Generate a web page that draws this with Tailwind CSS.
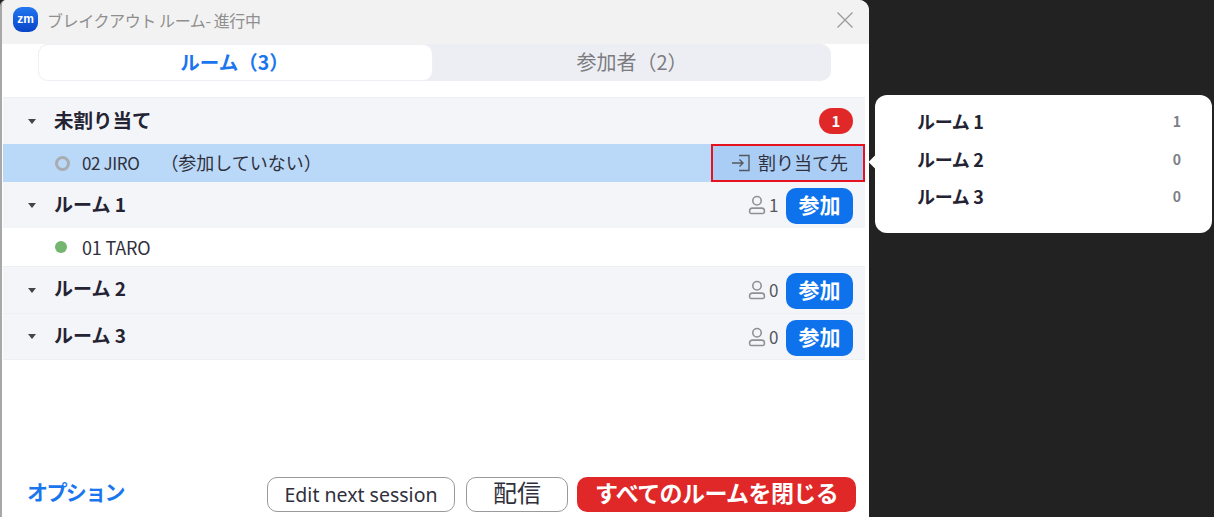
<!DOCTYPE html>
<html lang="ja">
<head>
  <meta charset="UTF-8" />
  <title>ブレイクアウト ルーム</title>
  <script src="https://cdn.jsdelivr.net/npm/@tailwindcss/browser@4"></script>
</head>
<body class="bg-[#222222] w-[1214px] h-[517px] overflow-hidden flex font-['Noto_Sans_CJK_JP','Noto_Sans',sans-serif]">

  <!-- main window -->
  <div class="w-[869px] h-[517px] bg-white rounded-tr-[10px] rounded-tl-[6px] border-l-2 border-[#a8a8a8] flex flex-col shrink-0 overflow-hidden">
    <div class="h-[44px] bg-[#f2f2f2] flex items-center pl-[11px] pr-[15px] shrink-0">
      <div class="w-[25px] h-[25px] -mt-[6px] rounded-[9px] bg-gradient-to-b from-[#2276f0] to-[#0b45c8] flex items-center justify-center text-white text-[12px] font-bold leading-none font-['Liberation_Sans',sans-serif]">zm</div>
      <span class="ml-[9px] -mt-[5px] text-[16px] text-[#8f8f8f] leading-none tracking-[-0.4px]">ブレイクアウト ルーム- 進行中</span>
      <svg class="ml-auto -mt-[5px]" width="18" height="18" viewBox="0 0 18 18" fill="none" stroke="#9a9a9a" stroke-width="1.3"><path d="M1.5 1.5 16.5 16.5M16.5 1.5 1.5 16.5"/></svg>
    </div>

    <div class="ml-[36px] w-[793px] h-[37px] bg-[#eceef4] rounded-[10px] flex shrink-0">
      <div class="w-[395px] bg-white border border-[#eff0f6] rounded-[10px] flex items-center justify-center pb-[2px] pr-[2px] text-[19.5px] font-bold text-[#1a76ee] whitespace-nowrap">ルーム（3）</div>
      <div class="flex-1 flex items-center justify-center pb-[2px] text-[20px] text-[#7c7c80] whitespace-nowrap">参加者（2）</div>
    </div>

    <div class="mt-[16px] ml-[1px] w-[862px] flex flex-col">
      <div class="h-[47px] bg-[#f4f5f8] border-t border-[#eeeff2] flex items-center pl-[25px] pr-[12px]">
        <span class="w-0 h-0 border-x-[4px] border-x-transparent border-t-[5px] border-t-[#444444]"></span>
        <span class="ml-[18px] -mt-[3px] text-[19.5px] font-bold text-[#232333]">未割り当て</span>
        <span class="ml-auto w-[34px] h-[26px] rounded-full bg-[#e02828] text-white text-[15px] font-bold flex items-center justify-center">1</span>
      </div>

      <div class="h-[38px] bg-[#bad8f7] flex items-center pl-[52px]">
        <span class="w-[15px] h-[15px] rounded-full border-[3px] border-[#a9adb2]"></span>
        <span class="ml-[12px] text-[17px] text-[#30303c] tracking-[-0.4px]">02 JIRO</span>
        <span class="ml-[21px] -mt-[2px] text-[18px] text-[#30303c] whitespace-nowrap">（参加していない）</span>
        <div class="ml-auto w-[154px] h-[38px] bg-[#a9cdf5] border-2 border-[#e8121e] flex items-center pl-[18px] gap-[7px]">
          <svg width="20" height="18" viewBox="0 0 20 18" fill="none" stroke="#55585f" stroke-width="1.4"><path d="M8 1.5h10v15H8M1 9h11M8.5 5.5 12 9l-3.5 3.5"/></svg>
          <span class="-mt-[2px] text-[18px] text-[#30303c] whitespace-nowrap">割り当て先</span>
        </div>
      </div>

      <div class="h-[46px] bg-[#f4f5f8] flex items-center pl-[25px] pr-[12px]">
        <span class="w-0 h-0 border-x-[4px] border-x-transparent border-t-[5px] border-t-[#444444]"></span>
        <span class="ml-[18px] -mt-[1px] text-[19px] font-bold text-[#232333]">ルーム 1</span>
        <svg class="ml-auto" width="18" height="20" viewBox="0 0 16 19" fill="none" stroke="#8e9096" stroke-width="1.5"><circle cx="8" cy="5.5" r="4"/><path d="M3.5 12.5h9a2.5 2.5 0 0 1 2.5 2.5v1.2a1.3 1.3 0 0 1-1.3 1.3H2.3A1.3 1.3 0 0 1 1 16.2V15a2.5 2.5 0 0 1 2.5-2.5Z"/></svg>
        <span class="ml-[3px] w-[13px] text-[17px] text-[#55555f]">1</span>
        <span class="ml-[4px] mt-[2px] w-[67px] h-[36px] rounded-[10px] bg-[#0e72ed] text-white text-[21px] font-bold flex items-center justify-center pb-[2px]">参加</span>
      </div>

      <div class="h-[39px] bg-white border-b border-[#eeeff2] flex items-center pl-[52px]">
        <span class="w-[12px] h-[12px] rounded-full bg-[#74b56f]"></span>
        <span class="ml-[15px] text-[18px] text-[#30303c] tracking-[-0.2px]">01 TARO</span>
      </div>

      <div class="h-[47px] bg-[#f4f5f8] border-b border-[#eeeff2] flex items-center pl-[25px] pr-[12px]">
        <span class="w-0 h-0 border-x-[4px] border-x-transparent border-t-[5px] border-t-[#444444]"></span>
        <span class="ml-[18px] -mt-[3px] text-[19px] font-bold text-[#232333]">ルーム 2</span>
        <svg class="ml-auto" width="18" height="20" viewBox="0 0 16 19" fill="none" stroke="#8e9096" stroke-width="1.5"><circle cx="8" cy="5.5" r="4"/><path d="M3.5 12.5h9a2.5 2.5 0 0 1 2.5 2.5v1.2a1.3 1.3 0 0 1-1.3 1.3H2.3A1.3 1.3 0 0 1 1 16.2V15a2.5 2.5 0 0 1 2.5-2.5Z"/></svg>
        <span class="ml-[3px] w-[13px] text-[17px] text-[#55555f]">0</span>
        <span class="ml-[4px] mt-[2px] w-[67px] h-[36px] rounded-[10px] bg-[#0e72ed] text-white text-[21px] font-bold flex items-center justify-center pb-[2px]">参加</span>
      </div>

      <div class="h-[46px] bg-[#f4f5f8] border-b border-[#eeeff2] flex items-center pl-[25px] pr-[12px]">
        <span class="w-0 h-0 border-x-[4px] border-x-transparent border-t-[5px] border-t-[#444444]"></span>
        <span class="ml-[18px] -mt-[2px] text-[19px] font-bold text-[#232333]">ルーム 3</span>
        <svg class="ml-auto" width="18" height="20" viewBox="0 0 16 19" fill="none" stroke="#8e9096" stroke-width="1.5"><circle cx="8" cy="5.5" r="4"/><path d="M3.5 12.5h9a2.5 2.5 0 0 1 2.5 2.5v1.2a1.3 1.3 0 0 1-1.3 1.3H2.3A1.3 1.3 0 0 1 1 16.2V15a2.5 2.5 0 0 1 2.5-2.5Z"/></svg>
        <span class="ml-[3px] w-[13px] text-[17px] text-[#55555f]">0</span>
        <span class="ml-[4px] mt-[2px] w-[67px] h-[36px] rounded-[10px] bg-[#0e72ed] text-white text-[21px] font-bold flex items-center justify-center pb-[2px]">参加</span>
      </div>
    </div>

    <div class="mt-auto mb-[5px] flex items-center pl-[25px]">
      <span class="w-[240px] text-[21px] font-bold text-[#1a76ee] tracking-[-1.6px] -mt-[5px]">オプション</span>
      <button class="w-[188px] h-[35px] rounded-[10px] border border-[#9a9a9e] text-[19.5px] text-[#30303c] font-['Noto_Sans',sans-serif] flex items-center justify-center whitespace-nowrap pt-[1px]">Edit next session</button>
      <button class="ml-[11px] w-[102px] h-[35px] rounded-[10px] border border-[#9a9a9e] text-[24px] text-[#30303c] flex items-center justify-center pb-[5px]">配信</button>
      <button class="ml-[9px] w-[279px] h-[35px] rounded-[10px] bg-[#e02828] text-[23px] font-bold text-white tracking-[-0.6px] flex items-center justify-center whitespace-nowrap pb-[4px]">すべてのルームを閉じる</button>
    </div>
  </div>

  <!-- assign menu -->
  <div class="relative ml-[6px] mt-[95px] w-[337px] h-[138px] bg-white rounded-[12px] py-[8px] pl-[42px] pr-[31px] shrink-0">
    <span class="absolute -left-[4px] top-[61px] w-[12px] h-[12px] rotate-45 bg-white"></span>
    <div class="h-[37.5px] flex items-center justify-between"><span class="text-[18px] tracking-[-0.3px] font-bold text-[#232333]">ルーム 1</span><span class="text-[14px] font-bold text-[#7c7f88]">1</span></div>
    <div class="h-[37.5px] flex items-center justify-between"><span class="text-[18px] tracking-[-0.3px] font-bold text-[#232333]">ルーム 2</span><span class="text-[14px] font-bold text-[#7c7f88]">0</span></div>
    <div class="h-[37.5px] flex items-center justify-between"><span class="text-[18px] tracking-[-0.3px] font-bold text-[#232333]">ルーム 3</span><span class="text-[14px] font-bold text-[#7c7f88]">0</span></div>
  </div>

</body>
</html>
